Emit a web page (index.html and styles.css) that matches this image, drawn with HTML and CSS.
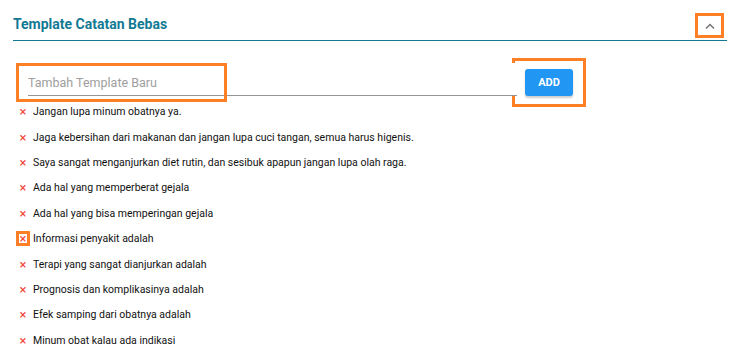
FILE: index.html
```html
<!DOCTYPE html>
<html lang="id">
	<head>
		<meta charset="UTF-8" />
		<meta name="viewport" content="width=device-width, initial-scale=1.0" />
		<title>Template Catatan Bebas</title>
		<link rel="stylesheet" href="styles.css">
	</head>
	<body>
		<div class="panel">
			<div class="panel-header">
				<h2 class="panel-title">Template Catatan Bebas</h2>
				<button class="toggle-btn mark" title="Tutup">
					<svg width="10" height="6" viewBox="0 0 10 6"><path d="M1 5.5 L5 1.5 L9 5.5" fill="none" stroke="#757575" stroke-width="1.5"/></svg>
				</button>
			</div>

			<div class="add-row">
				<div class="field">
					<div class="field-mark mark"></div>
					<input type="text" placeholder="Tambah Template Baru" />
				</div>
				<div class="add-wrap mark">
					<button class="add-btn">ADD</button>
				</div>
			</div>

			<ul class="template-list">
				<li><span class="remove">×</span>Jangan lupa minum obatnya ya.</li>
				<li><span class="remove">×</span>Jaga kebersihan dari makanan dan jangan lupa cuci tangan, semua harus higenis.</li>
				<li><span class="remove">×</span>Saya sangat menganjurkan diet rutin, dan sesibuk apapun jangan lupa olah raga.</li>
				<li><span class="remove">×</span>Ada hal yang memperberat gejala</li>
				<li><span class="remove">×</span>Ada hal yang bisa memperingan gejala</li>
				<li><span class="remove mark">×</span>Informasi penyakit adalah</li>
				<li><span class="remove">×</span>Terapi yang sangat dianjurkan adalah</li>
				<li><span class="remove">×</span>Prognosis dan komplikasinya adalah</li>
				<li><span class="remove">×</span>Efek samping dari obatnya adalah</li>
				<li><span class="remove">×</span>Minum obat kalau ada indikasi</li>
			</ul>
		</div>
	</body>
</html>
```

FILE: styles.css
```css
body {
	font-family: Roboto, "Liberation Sans", Arial, sans-serif;
	margin: 0;
	padding: 0 7px 0 13px;
	background: #fff;
	color: #212121;
}
.mark {
	outline: 3px solid #ff7f27;
	outline-offset: -3px;
}
.panel-header {
	display: flex;
	align-items: flex-start;
	justify-content: space-between;
	height: 41px;
	box-sizing: border-box;
	border-bottom: 1px solid #137a94;
}
.panel-title {
	margin: 16px 0 0 0;
	font-size: 14px;
	line-height: 16px;
	font-weight: 700;
	color: #137a94;
}
.toggle-btn {
	width: 29px;
	height: 25px;
	margin-right: 3px;
	margin-top: 13px;
	border: none;
	background: none;
	padding: 0;
	display: flex;
	align-items: center;
	justify-content: center;
	cursor: pointer;
}
.add-row {
	display: flex;
	align-items: flex-start;
	height: 41px;
	margin-top: 17px;
}
.field {
	position: relative;
	width: 489px;
	padding: 5px 0 0 15px;
}
.field-mark {
	position: absolute;
	left: 3px;
	top: 5px;
	width: 211px;
	height: 39px;
	pointer-events: none;
}
.field input {
	width: 100%;
	box-sizing: border-box;
	border: none;
	border-bottom: 1px solid #949494;
	font-family: inherit;
	font-size: 12.5px;
	padding: 12px 0 5px 0;
	margin-top: 0;
	outline: none;
}
.field input::placeholder {
	color: #9e9e9e;
}
.add-wrap {
	width: 74px;
	height: 49px;
	margin-left: -5px;
	display: flex;
	align-items: center;
	justify-content: center;
}
.add-btn {
	width: 48px;
	height: 27px;
	background-color: #2196f3;
	color: #fff;
	border: none;
	border-radius: 3px;
	font-family: inherit;
	font-size: 11px;
	font-weight: 700;
	box-shadow: 0 2px 2px rgba(0, 0, 0, 0.2);
	cursor: pointer;
}
.template-list {
	list-style: none;
	margin: 0;
	padding: 0 0 0 3px;
}
.template-list li {
	display: flex;
	align-items: center;
	height: 25.4px;
	font-size: 10.5px;
	color: #111;
}
.remove {
	width: 14px;
	height: 15px;
	display: flex;
	align-items: center;
	justify-content: center;
	margin-right: 3px;
	color: #f44336;
	font-size: 13px;
	cursor: pointer;
}
```
